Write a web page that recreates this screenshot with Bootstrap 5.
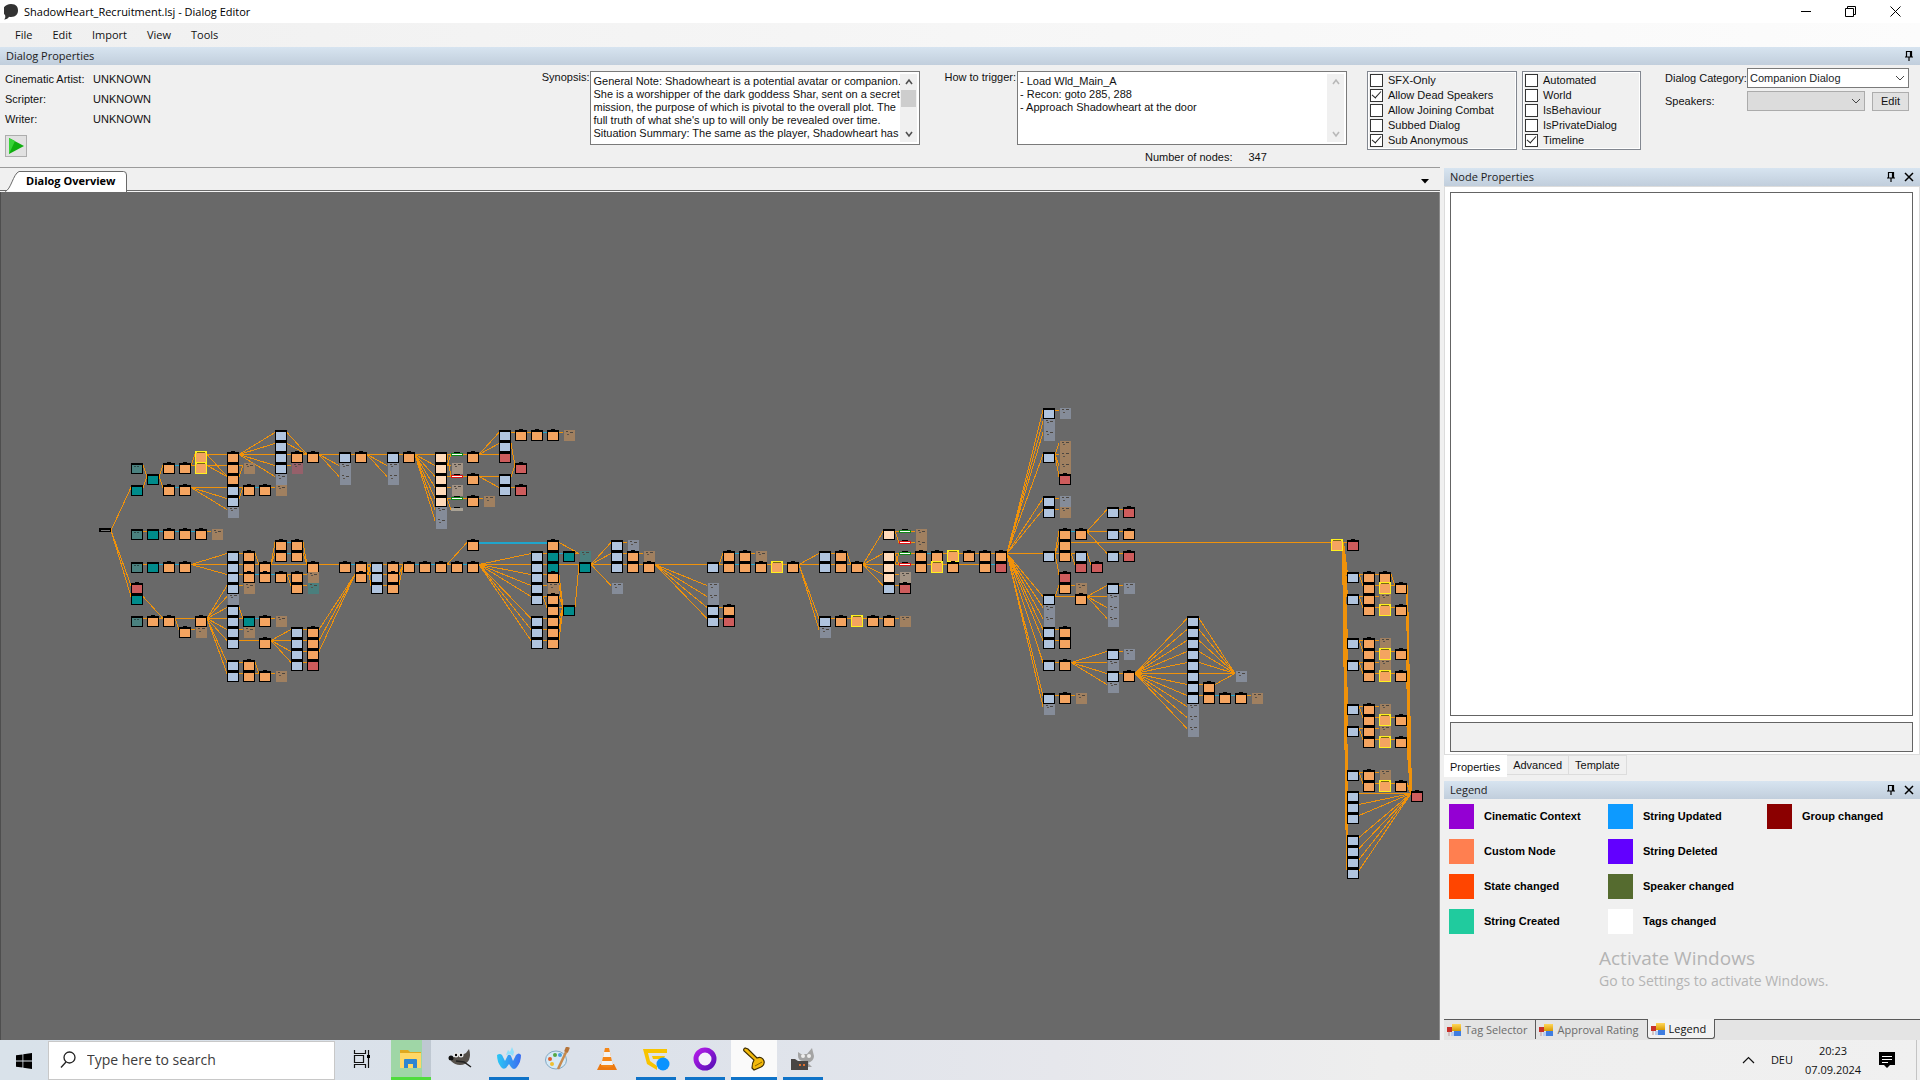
<!DOCTYPE html>
<html lang="en">
<head>
<meta charset="utf-8">
<meta name="viewport" content="width=device-width, initial-scale=1">
<title>ShadowHeart_Recruitment.lsj - Dialog Editor</title>
<link rel="stylesheet" href="https://cdn.jsdelivr.net/npm/bootstrap@5.3.0/dist/css/bootstrap.min.css">
<style>
:root{--ui:"Open Sans","Noto Sans",sans-serif;--form:"Liberation Sans",Arial,sans-serif}
body{font:11px/13px var(--form);color:#111;background:#f0f0f0}
button,input,select,textarea{font:inherit;color:inherit}
.app-window{height:100vh}
.ui-font{font-family:var(--ui);font-size:11px;line-height:18px}
.title-bar{height:23px;background:#fff;color:#000;padding-right:2px}
.win-btn{width:45px;height:20px}
.menu-strip{height:24px;background:linear-gradient(90deg,#f0f0f0,#fcfcfc);padding-left:7px}
.menu-strip a{color:#111;padding:3px 8px}
.dock-head{height:18px;background:linear-gradient(#d7e4f0,#c1cedc);color:#1c1c1c;padding:0 6px}
.plain-btn{background:none;border:0;padding:0;color:#000}
.props{padding:3px 11px 0 5px;height:102px;background:#f0f0f0}
.drop{margin-top:3px}
.meta-list{grid-template-columns:88px auto;grid-auto-rows:20px;justify-content:start;align-items:center;padding-top:1px}
.play-btn{width:22px;height:22px;background:#e1e1e1;border:1px solid #adadad;padding:0;margin-top:6px}
.memo-label{margin-right:1px}
.memo{width:330px;height:74px;background:#fff;border:1px solid #7a7a7a;padding:2px}
.memo textarea{border:0;resize:none;overflow:hidden;outline:0;line-height:13px;padding:1px 0 0;background:#fff;white-space:pre;min-width:0}
.memo-scroll{width:17px;background:#f0f0f0;color:#505050;padding:4px 0}
.memo-scroll.is-idle{color:#b8b8b8}
.memo-scroll i{width:15px;height:17px;background:#cdcdcd}
.node-count{padding:6px 0 0 128px}
.flags{border:1px solid #828790;height:79px;padding:1px 2px;box-shadow:inset 0 0 0 1px #fff}
.flags .tick-row{height:15px;gap:5px}
.flags-a{width:150px;margin-left:20px}
.flags-b{width:119px;margin-left:5px}
.tick{appearance:none;width:13px;height:13px;margin:0;border:1px solid #333;background:#fff}
.tick:checked::before{content:"";display:block;width:9px;height:5px;margin:1px 1px;border:solid #222;border-width:0 0 1px 1px;transform:rotate(-48deg)}
.combo-grid{grid-template-columns:82px 118px 44px;row-gap:3px}
.combo-wide{grid-column:span 2}
.combo{height:20px;border:1px solid #7a7a7a;border-radius:0;padding:0 20px 0 2px;background-color:#fff;background-position:right 3px center;background-size:10px 6px;font-size:11px;line-height:16px;
 --bs-form-select-bg-img:url("data:image/svg+xml,%3csvg xmlns='http://www.w3.org/2000/svg' viewBox='0 0 10 6'%3e%3cpath fill='none' stroke='%23444' d='M1 1l4 4 4-4'/%3e%3c/svg%3e")}
.combo:disabled{background-color:#dcdcdc;border-color:#ababab}
.edit-btn{width:37px;height:19px;background:#e1e1e1;border:1px solid #adadad;padding:0}
.side-dock{width:476px;padding-top:1px}
.doc-strip{height:25px;border-top:1px solid #9b9b9b;border-bottom:1px solid #f4f4f4;box-shadow:inset 0 -1px #696969}
.doc-tab{width:128px;height:20px;padding-left:26px}
.doc-tab svg{left:5px;top:0}
.doc-tab span{font:700 11px/19px var(--ui)}
.graph-area{background:#696969;border-left:1px solid #4e4e4e;border-right:1px solid #8a8a8a}
.prop-page{background:#fff;border:1px solid #dcdcdc;padding:5px 6px 2px 5px;gap:6px}
.prop-grid{background:#fff;border:1px solid #646464}
.prop-help{height:30px;background:#f0f0f0;border:1px solid #646464}
.page-tabs{height:26px}
.page-tabs a{color:#111;border:1px solid #dcdcdc;border-left:0;height:20px;padding:0 6px;line-height:18px}
.page-tabs a.is-active{background:#fff;height:22px;border-color:#fff;line-height:23px}
.legend-body{padding:5px 5px 0;height:220px}
.legend-grid{display:grid;grid-template-columns:repeat(3,159px);grid-auto-flow:column;grid-template-rows:repeat(4,35px)}
.legend-grid div{font:700 11px/25px var(--form);gap:10px;color:#000}
.swatch{width:25px;height:25px}
.activate{font-family:var(--ui);color:#b4b4b4;padding:1px 0 0 150px}
.activate p{font-size:19px;line-height:27px;margin:0}
.activate small{font-size:14px;line-height:18px;display:block}
.dock-tabs{height:21px;background:#e4e4e4}
.dock-tabs a{color:#6b6b6b;border-top:1px solid #5a5a5a;height:20px;padding:0 8px 0 3px;gap:4px;line-height:18px}
.dock-tabs a + a{border-left:1px solid #5a5a5a}
.dock-tabs a.is-active{color:#111;background:#f2f2f2;border:1px solid #5a5a5a;border-top:0;border-radius:0 0 3px 3px}
.dock-tabs .tab-rest{border-top:1px solid #5a5a5a}
.task-bar{height:40px;background:linear-gradient(90deg,#d9e2ea,#dbe1ea 30%,#e6e7ec 55%,#eee 72%,#f0f0f0)}
.start-btn{width:48px}
.search-box{width:287px;height:39px;background:#fff;border:1px solid #c8c8c8;padding-left:11px;gap:11px}
.search-box input{border:0;outline:0;background:none;font:14px/20px var(--ui);padding:0;color:#3c3c3c}
.search-box input::placeholder{color:#3c3c3c;opacity:1}
.task-list{gap:9px;padding-left:7px}
.task-btn{width:40px;height:40px;border-bottom:3px solid transparent}
.task-btn.running{border-bottom-color:#0f73c8}
.task-btn.front{width:46px;margin:0 -3px;background:#fafafa}
.task-btn.alerting{background:linear-gradient(90deg,#9fd6a6 78%,#bfc8d2 78%);border-bottom-color:#4fdc3c}
.tray{height:40px;border-right:1px solid #c4c4c4;margin-right:3px;padding-right:21px}
.clock{width:56px;line-height:19px;margin:0 18px 0 12px}
</style>
<script src="https://cdn.jsdelivr.net/npm/bootstrap@5.3.0/dist/js/bootstrap.bundle.min.js"></script>
</head>
<body>
<svg width="0" height="0" class="position-absolute" aria-hidden="true">
  <symbol id="pin" viewBox="0 0 10 12"><path d="M2.500 6.500V1.500H7.500V6.500M6.500 1.500V7M1 7H9M5 7V11" fill="none" stroke="#000" stroke-width="1.200"/></symbol>
  <symbol id="cross" viewBox="0 0 10 10"><path d="M1 1L9 9M9 1L1 9" fill="none" stroke="#000" stroke-width="1.500"/></symbol>
  <symbol id="up" viewBox="0 0 8 8"><path d="M1 6L4 2L7 6" fill="none" stroke="currentColor" stroke-width="1.600"/></symbol>
  <symbol id="down" viewBox="0 0 8 8"><path d="M1 2L4 6L7 2" fill="none" stroke="currentColor" stroke-width="1.600"/></symbol>
  <linearGradient id="gy" x2="0" y2="1"><stop stop-color="#ffd75a"/><stop offset="1" stop-color="#d99a00"/></linearGradient>
  <symbol id="form" viewBox="0 0 14 14"><path d="M2 7V13" stroke="#b99"/><rect x="0" y="4" width="5" height="5" fill="#c8302a"/><rect x="5" y="1" width="9" height="7" fill="url(#gy)"/><rect x="7" y="8" width="7" height="5" fill="#3f7de0"/><rect x="4" y="9" width="3" height="4" fill="#b8cdf0"/></symbol>
</svg>

<div class="app-window d-flex flex-column overflow-hidden">
  <header class="title-bar d-flex align-items-center ui-font">
    <svg class="ms-1" width="16" height="18" viewBox="0 0 16 18"><path d="M7 1C12.500 1 14 4 14 7.500S12 14 7 14C6 14 5.500 14 5 13.800C4 15.500 2.500 16.500 0 16.500C1.500 15 1.500 13.500 1 12C0 11-1 9.500-1 7.500C-1 4 2.500 1 7 1Z" fill="#333"/></svg>
    <span class="ms-1">ShadowHeart_Recruitment.lsj - Dialog Editor</span>
    <div class="ms-auto d-flex align-self-start">
      <button class="win-btn plain-btn" aria-label="Minimize"><svg width="10" height="10"><path d="M0 5.500H10" stroke="#000"/></svg></button>
      <button class="win-btn plain-btn" aria-label="Restore"><svg width="11" height="11"><path d="M.5 2.500H8.500V10.500H.5ZM2.500 2.500V.5H10.500V8.500H8.500" fill="none" stroke="#000"/></svg></button>
      <button class="win-btn plain-btn" aria-label="Close"><svg width="11" height="11"><path d="M.5 .5L10.500 10.500M10.500 .5L.5 10.500" stroke="#000"/></svg></button>
    </div>
  </header>

  <nav class="menu-strip d-flex align-items-center ui-font">
    <a class="text-decoration-none" href="#">File</a><a class="text-decoration-none ms-1" href="#">Edit</a><a class="text-decoration-none ms-1" href="#">Import</a><a class="text-decoration-none ms-1" href="#">View</a><a class="text-decoration-none ms-1" href="#">Tools</a>
  </nav>

  <div class="dock-head d-flex align-items-center ui-font"><span>Dialog Properties</span><button class="plain-btn ms-auto d-flex" aria-label="Pin"><svg width="10" height="12"><use href="#pin"/></svg></button></div>

  <section class="props d-flex align-items-start">
    <div class="flex-grow-1">
      <div class="meta-list d-grid"><span>Cinematic Artist:</span><span>UNKNOWN</span><span>Scripter:</span><span>UNKNOWN</span><span>Writer:</span><span>UNKNOWN</span></div>
      <button class="play-btn d-flex align-items-center justify-content-center" aria-label="Play"><svg width="16" height="16" viewBox="0 0 16 16"><path d="M1 0L16 8L1 16Z" fill="#0fae0f"/><path d="M1 0L7 3L1 16Z" fill="#37d437"/></svg></button>
    </div>
    <div class="d-flex drop">
      <label class="memo-label" for="synopsis">Synopsis:</label>
      <div class="memo d-flex">
        <textarea id="synopsis" class="flex-grow-1">General Note: Shadowheart is a potential avatar or companion.
She is a worshipper of the dark goddess Shar, sent on a secret
mission, the purpose of which is pivotal to the overall plot. The
full truth of what she's up to will only be revealed over time.
Situation Summary: The same as the player, Shadowheart has
been on a mind flayer's ship. Escaped and crashed near the</textarea>
        <div class="memo-scroll d-flex flex-column align-items-center flex-shrink-0"><svg width="8" height="8"><use href="#up"/></svg><i class="mt-1"></i><svg class="mt-auto" width="8" height="8"><use href="#down"/></svg></div>
      </div>
      <label class="memo-label ms-4" for="trigger">How to trigger:</label>
      <div>
        <div class="memo d-flex">
          <textarea id="trigger" class="flex-grow-1">- Load Wld_Main_A
- Recon: goto 285, 288
- Approach Shadowheart at the door</textarea>
          <div class="memo-scroll is-idle d-flex flex-column align-items-center flex-shrink-0"><svg width="8" height="8"><use href="#up"/></svg><svg class="mt-auto" width="8" height="8"><use href="#down"/></svg></div>
        </div>
        <div class="node-count d-flex gap-3"><span>Number of nodes:</span><span>347</span></div>
      </div>
    </div>
    <div class="flags flags-a drop" id="flagsA"></div>
    <div class="flags flags-b drop" id="flagsB"></div>
    <div class="combo-grid d-grid align-items-center ms-4">
      <label for="category">Dialog Category:</label>
      <select id="category" class="form-select combo combo-wide"><option>Companion Dialog</option></select>
      <label for="speakers">Speakers:</label>
      <select id="speakers" class="form-select combo" disabled><option></option></select>
      <button class="edit-btn ms-auto">Edit</button>
    </div>
  </section>

  <main class="d-flex flex-grow-1 overflow-hidden">
    <section class="d-flex flex-column flex-grow-1 overflow-hidden">
      <div class="doc-strip d-flex align-items-end">
        <a class="doc-tab position-relative text-decoration-none text-black" href="#">
          <svg class="position-absolute" width="122" height="21"><path d="M0 20.500C6 19 8 3 14 .5H118.500Q121.500 .5 121.500 4V21.500" fill="#fff" stroke="#696969"/></svg>
          <span class="position-relative">Dialog Overview</span>
        </a>
        <button class="plain-btn ms-auto me-2 mb-1" aria-label="Open documents"><svg width="12" height="8"><path d="M1 2H9L5 6.500Z"/></svg></button>
      </div>
      <div class="graph-area flex-grow-1 overflow-hidden">
        <svg id="graph" class="d-block" width="1438" height="848" viewBox="1 192 1438 848" shape-rendering="crispEdges" role="img" aria-label="Dialog node graph"></svg>
      </div>
    </section>

    <aside class="side-dock d-flex flex-column flex-shrink-0 ms-1">
      <div class="dock-head d-flex align-items-center ui-font"><span>Node Properties</span><button class="plain-btn ms-auto me-2 d-flex" aria-label="Pin"><svg width="10" height="12"><use href="#pin"/></svg></button><button class="plain-btn d-flex" aria-label="Close"><svg width="10" height="10"><use href="#cross"/></svg></button></div>
      <div class="prop-page d-flex flex-column flex-grow-1"><div class="prop-grid flex-grow-1"></div><div class="prop-help"></div></div>
      <div class="page-tabs d-flex"><a class="is-active text-decoration-none" href="#">Properties</a><a class="text-decoration-none" href="#">Advanced</a><a class="text-decoration-none" href="#">Template</a></div>
      <div class="dock-head d-flex align-items-center ui-font"><span>Legend</span><button class="plain-btn ms-auto me-2 d-flex" aria-label="Pin"><svg width="10" height="12"><use href="#pin"/></svg></button><button class="plain-btn d-flex" aria-label="Close"><svg width="10" height="10"><use href="#cross"/></svg></button></div>
      <div class="legend-body">
        <div class="legend-grid" id="legend"></div>
        <div class="activate"><p>Activate Windows</p><small>Go to Settings to activate Windows.</small></div>
      </div>
      <div class="dock-tabs d-flex ui-font">
        <a class="d-flex align-items-center text-decoration-none" href="#"><svg width="14" height="14"><use href="#form"/></svg>Tag Selector</a>
        <a class="d-flex align-items-center text-decoration-none" href="#"><svg width="14" height="14"><use href="#form"/></svg>Approval Rating</a>
        <a class="is-active d-flex align-items-center text-decoration-none" href="#"><svg width="14" height="14"><use href="#form"/></svg>Legend</a>
        <span class="tab-rest flex-grow-1"></span>
      </div>
    </aside>
  </main>

  <footer class="task-bar d-flex align-items-center ui-font">
    <button class="start-btn plain-btn" aria-label="Start"><svg width="16" height="16" viewBox="0 0 16 16"><path d="M0 2.300L6.500 1.400V7.600H0ZM7.300 1.300L16 0V7.600H7.300ZM0 8.400H6.500V14.600L0 13.700ZM7.300 8.400H16V16L7.300 14.700Z"/></svg></button>
    <label class="search-box d-flex align-items-center"><svg width="16" height="18" viewBox="0 0 16 18"><circle cx="9.500" cy="6.500" r="5.500" fill="none" stroke="#222" stroke-width="1.300"/><path d="M6 11L1 16.500" stroke="#222" stroke-width="1.300"/></svg><input type="text" placeholder="Type here to search" aria-label="Search"></label>
    <div class="task-list d-flex">
      <button class="task-btn plain-btn" aria-label="Task View"><svg width="18" height="18" viewBox="0 0 18 18"><path d="M1.500 0V3.500H12.500V0M1.500 18V14.500H12.500V18M1.500 5.500H10.500V12.500H1.500ZM15.500 0V18" fill="none" stroke="#111" stroke-width="1.200"/><path d="M14 5H17V8H14Z"/></svg></button>
      <button class="task-btn plain-btn alerting" aria-label="File Explorer"><svg width="24" height="22" viewBox="0 0 24 22"><path d="M1 2H9L11 4H22V20H1Z" fill="#e0a91f"/><path d="M1 5H22V20H1Z" fill="#ffd866"/><path d="M5 20V12Q5 11 6 11H17Q18 11 18 12V20H14V16H9V20Z" fill="#2f86d0"/></svg></button>
      <button class="task-btn plain-btn" aria-label="GIMP"><svg width="26" height="24" viewBox="0 0 26 24"><path d="M5 11L9 9L15 8L19 6L22 2Q24 8 22 13Q19 18 13 18Q8 18 4 14Z" fill="#55504a"/><circle cx="4" cy="11" r="2.500" fill="#111"/><circle cx="9" cy="8" r="2.500" fill="#eee"/><circle cx="14" cy="8" r="2.500" fill="#eee"/><circle cx="9" cy="8" r="1.200"/><circle cx="14" cy="8" r="1.200"/><path d="M9 14L17 15L24 20" stroke="#222" stroke-width="1.500" fill="none"/></svg></button>
      <button class="task-btn plain-btn running" aria-label="Waterfox"><svg width="26" height="24" viewBox="0 0 26 24"><defs><linearGradient id="wf"><stop stop-color="#2cc8f5"/><stop offset="1" stop-color="#3b6cf0"/></linearGradient></defs><path d="M1 8Q4 6 6 8L9 14L12 8Q14 7 15 9L17 14L20 8Q23 5 25 8Q25 15 21 20Q18 24 15 20L13 17L10 21Q7 23 5 20Q1 15 1 8Z" fill="url(#wf)"/><path d="M10 8L12 3L14 5L16 0L18 5L17 9L14 7Z" fill="#8fe0fb"/></svg></button>
      <button class="task-btn plain-btn" aria-label="Paint"><svg width="26" height="24" viewBox="0 0 26 24"><ellipse cx="11" cy="13" rx="10.500" ry="9" fill="#d5e9f6" stroke="#82a9c4"/><circle cx="10" cy="8" r="2" fill="#54a846"/><circle cx="15" cy="8" r="2" fill="#4a9ee0"/><circle cx="5" cy="12" r="2" fill="#e0602c"/><circle cx="7" cy="17" r="2" fill="#f0c030"/><path d="M22 3L13 22" stroke="#c78a4e" stroke-width="2.500"/><path d="M23 0L21 5" stroke="#b5743a" stroke-width="4"/></svg></button>
      <button class="task-btn plain-btn" aria-label="VLC"><svg width="22" height="24" viewBox="0 0 22 24"><path d="M1 23L4 17H18L21 23Z" fill="#ec7a12"/><path d="M9 1H13L17 19Q11 22 5 19Z" fill="#f58718"/><path d="M8 5H14L15 10H7ZM6 14H16L17 18H5Z" fill="#f4f4f4"/></svg></button>
      <button class="task-btn plain-btn running" aria-label="GameGuru"><svg width="28" height="24" viewBox="0 0 28 24"><path d="M1 2H25V6H6L8 14L15 19V23L5 17Z" fill="#f8c400"/><path d="M10 9H23L21 14H17V12H11Z" fill="#f8c400"/><circle cx="21" cy="17" r="6.500" fill="#0a93ff"/></svg></button>
      <button class="task-btn plain-btn running" aria-label="Browser"><svg width="24" height="24" viewBox="0 0 24 24"><defs><linearGradient id="br" x2="1" y2="1"><stop stop-color="#b31be8"/><stop offset="1" stop-color="#5a10b8"/></linearGradient></defs><circle cx="12" cy="12" r="9" fill="#f4f0fa" stroke="url(#br)" stroke-width="5"/></svg></button>
      <button class="task-btn plain-btn running front" aria-label="Dialog Editor"><svg width="24" height="24" viewBox="0 0 24 24"><path d="M10 21Q10 16 12 13L2 4Q1 2 3 1L6 2L15 11Q20 9 22 14Q23 18 19 20L12 23Z" fill="#f2b90c" stroke="#3c2c00" stroke-width="1.200"/><path d="M13 19L20 15" stroke="#8a6500"/></svg></button>
      <button class="task-btn plain-btn running" aria-label="Tools"><svg width="26" height="24" viewBox="0 0 26 24"><path d="M8 5L11 7H17L22 1L24 9Q24 14 18 16L22 20H13L14 14Q8 14 8 9Z" fill="#a4a4a4"/><circle cx="13" cy="9" r="2" fill="#eee"/><circle cx="19" cy="9" r="2" fill="#eee"/><path d="M1 12H5L8 14H18V23H1Z" fill="#4a4644"/><path d="M9 17H11V19H9ZM13 17H15V19H13Z" fill="#e07030"/></svg></button>
    </div>
    <div class="tray ms-auto d-flex align-items-center">
      <button class="plain-btn d-flex me-3" aria-label="Show hidden icons"><svg width="13" height="8"><path d="M1 7L6.500 1.500L12 7" fill="none" stroke="#111" stroke-width="1.200"/></svg></button>
      <span>DEU</span>
      <div class="clock text-center">20:23<br>07.09.2024</div>
      <button class="plain-btn d-flex" aria-label="Notifications"><svg width="16" height="16" viewBox="0 0 16 16"><path d="M0 0H16V13H11L8 16L5 13H0Z"/><path d="M3 4.500H13M3 7.500H13M3 10.500H9" stroke="#fff"/></svg></button>
    </div>
  </footer>
</div>

<script>
const checks = {
  flagsA: [['SFX-Only',0],['Allow Dead Speakers',1],['Allow Joining Combat',0],['Subbed Dialog',0],['Sub Anonymous',1]],
  flagsB: [['Automated',0],['World',0],['IsBehaviour',0],['IsPrivateDialog',0],['Timeline',1]]
};
for (const id in checks)
  document.getElementById(id).innerHTML = checks[id].map(([t,on]) =>
    `<label class="tick-row d-flex align-items-center"><input class="tick" type="checkbox"${on?' checked':''}>${t}</label>`).join('');

const legend = [['Cinematic Context','#9400d3'],['Custom Node','#ff7f50'],['State changed','#ff4500'],['String Created','#20cb9e'],
  ['String Updated','#0d9aff'],['String Deleted','#6200ff'],['Speaker changed','#556b2f'],['Tags changed','#ffffff'],['Group changed','#8b0000']];
document.getElementById('legend').innerHTML = legend.map(([t,c]) =>
  `<div class="d-flex"><span class="swatch" style="background:${c}"></span>${t}</div>`).join('');

/* Node table: one line per row, each entry is column + kind. */
const rows = `0 57b 58B
1 57B
2 9b 23b 24o 25o 26o 27O 57B
3 9b 23b 58O
4 4y 6o 9b 10o 11o 13b 14o 16b 17o 19p 20g 21o 23r 57b 58O
5 0t 2o 3o 4y 6o 7O 9b 10R 13B 16B 19p 20P 24r 58O
6 1t 6o 9B 13B 16B 19p 20x 21o 23b 58r
7 0t 2o 3o 6b 7o 8o 9O 19p 20P 23b 24r
8 6b 19p 20g 21o 22O 57b 58B
9 6B 19B 20G 57b 58O 61b 62r
10 19B
11 0f 1t 2o 3o 4o 5O 47p 48g 49O 58o 59o 61b 62o
12 9o 10o 21o 26o 30b 31B 48x 49O 58o 75y 76r
13 6b 7o 9o 10o 25b 26t 27t 28T 30b 31o 32O 37o 38o 39O 43b 44o 47p 48g 49o 50o 51y 52o 53o 54o 57b 58o 59b 61b 62r
14 0f 1t 2o 3o 6b 7o 8o 11o 13o 14o 15b 16o 17o 18o 19o 20o 21o 25b 26t 28t 30b 31o 32o 36b 37o 38o 39o 40y 41o 43b 44o 45o 47p 48x 49o 50y 51o 53o 54r 59r 60r
15 6b 7o 8o 9o 10o 11O 14o 15b 16o 25b 26o 47p 48P 58r 76b 77o 78o
16 0r 6b 7O 10o 11T 15b 16o 25b 26O 30B 36B 47b 48r 58o 59O 61b 62B 77o 78y 79o
17 0t 6B 25b 26o 36B 57b 59o 61B 76b 77o 78O
18 6b 26o 27t 36b 37o 57B 61B 77o 78y 79o
19 0f 1o 2o 4o 6b 7t 8o 9O 25b 26o 36b 37r 43b 44o 45y 46o 47o 48O 57B 61B 66b
20 3o 4O 6b 7O 10b 11o 25b 26o 43B 57b 58o 66b
21 6b 8o 10b 11o 25b 26o 57b 58o 66b 76b 77o 78O
22 10b 11o 61b 62B 66b 77o 78y 79o
23 6b 7o 10b 11r 57b 58o 61B 66b 76b 77o 78O
24 6b 7o 8o 9O 61b 62o 66b 69B 77o 78y 79o
25 61B 66b 67o
26 57b 58o 59O 66b 67o 68o 69o 70O
27 57B 66B 76b 77o 78O
28 66B 77o 78y 79o
29 66B 76b 77o 78O
30 77o 78y 79o
33 76b 77o 78O
34 77o 78y 79o
35 76b 80r
36 76b
37 76b
39 76b
40 76b
41 76b
42 76b`.replace('5 0t', '5 0f');

/* Links: source: targets, as column.row; a leading * marks a blue link. */
const links = `0.5:1.6;0.7:1.6;1.6:2.5 2.7;2.5:*3.5;3.5:4.4 4.5;4.4:6.4 6.6;4.5:6.5 6.6;2.7:*3.7;3.7:6.7 6.8 6.9
6.4:9.2 9.3 9.4 9.5 9.6;6.5:7.5;6.6:7.5;6.7:7.7;6.8:7.7;7.7:*8.7;8.7:9.7;9.2:11.4;9.3:11.4;9.4:10.4;9.5:10.5;10.4:11.4
11.4:13.4 13.5 13.6;13.4:14.4;14.4:16.4 16.5 16.6;16.4:17.4;17.4:19.4 19.5 19.6 19.7 19.8 19.9 19.10
0.11:1.11;1.11:*2.11;2.11:*3.11;3.11:*4.11;4.11:5.11;0.14:1.14;1.14:*2.14;2.14:*3.14;3.14:6.13 6.14 6.15
6.13:7.13;6.14:7.14;7.13:8.14;7.14:8.14;8.14:9.12 9.13 11.14;9.12:*10.12;9.13:*10.13;10.12:11.14;10.13:11.14
6.15:7.15;7.15:*8.15;8.15:*9.15;9.15:10.15 10.16;10.15:11.15;10.16:11.16;11.14:13.14;13.14:*14.14;14.14:15.14 15.15 15.16;14.15:15.15 15.14
15.14:16.14;15.15:16.15;15.16:16.16;16.14:17.14;16.15:17.14;16.16:17.14;17.14:*18.14;18.14:*19.14;19.14:20.14 21.12;20.14:*21.14;21.12:*26.12
21.14:25.13 25.14 25.15 25.16 25.17 25.19 25.20 25.21;0.17:2.19;0.19:1.19;1.19:2.19;2.19:4.19 3.20;3.20:4.20
4.19:6.16 6.17 6.18 6.19 6.20 6.21 6.23 6.24;6.16:7.16;6.18:7.19;6.19:7.19;7.19:*8.19;8.19:9.19;6.20:7.20;6.21:8.21;8.21:10.20 10.21 10.22 10.23
10.20:11.20;10.21:11.21;10.22:11.22;10.23:11.23;11.20:14.15;11.21:14.15;11.22:14.15;6.23:7.23;6.24:7.24;7.23:8.24;7.24:8.24;8.24:9.24
19.4:20.4 20.6;19.5:20.5 20.4;19.6:20.6;19.7:20.7;19.8:20.8 20.9;20.4:21.4;20.6:21.6;20.8:21.8;21.8:22.8;21.4:23.2 23.3 23.4;21.6:23.6 23.7
23.2:24.2;24.2:25.2;25.2:*26.2;26.2:27.2;23.3:24.5;23.6:24.5;23.7:24.7;25.13:26.13;26.13:*27.13;27.13:28.13;25.14:26.14;26.14:28.14
25.15:26.15;25.16:26.16;25.17:26.17;25.17:26.18;25.19:26.19;25.20:26.20;25.21:26.21;26.12:28.13;26.15:27.18;26.16:27.18;26.17:27.18;26.18:27.18;26.19:27.18;26.20:27.18;26.21:27.18
27.18:28.14;28.14:30.12 30.13 30.14 30.16;30.12:31.12;30.13:31.13;30.14:31.14;31.13:32.13;31.14:32.14;32.14:36.14 36.16 36.17 36.18 36.19
36.14:37.14 37.13;37.13:*38.13;38.13:39.13;37.14:*38.14;38.14:*39.14;39.14:40.14;40.14:41.14;36.18:37.18;36.19:37.19;41.14:43.13 43.14 43.19 43.20
43.13:44.13;43.14:44.14;44.13:45.14;44.14:45.14;45.14:47.11 47.13 47.14 47.15 47.16;47.11:48.11 48.12;48.11:49.11;48.12:49.12;47.13:48.13 48.14;47.14:48.14 48.13
47.15:48.15;47.16:48.16;48.13:49.13;48.14:49.14;49.13:*50.13;50.13:51.13;51.13:52.13;52.13:53.13;53.13:54.13;49.14:50.14;50.14:51.14;51.14:53.14;53.14:*54.14
43.19:44.19;44.19:45.19;45.19:46.19;46.19:47.19;47.19:48.19
54.13:57.0 57.1 57.2 57.4 57.8 57.9 57.13 57.17 57.18 57.19 57.20 57.21 57.23 57.26 57.27
57.0:58.0;57.4:58.3 58.4 58.5 58.6;57.8:58.8;57.9:58.9;57.13:58.11 58.12 58.13 58.15;58.11:*59.11;59.11:61.9 61.11 61.13;61.9:62.9;61.11:62.11;61.13:62.13
58.12:75.12;58.13:59.13 59.14;59.13:60.14;57.17:58.16 59.17;58.16:59.16;59.17:61.16 61.17 61.18 61.19;61.16:62.16;57.20:58.20;57.21:58.21;57.23:58.23;58.23:61.22 61.23 61.24 61.25
61.22:62.22;61.24:62.24;62.24:66.19 66.20 66.21 66.22 66.23 66.24 66.25 66.26 66.27 66.28 66.29
66.19:69.24;66.20:69.24;66.21:69.24;66.22:69.24;66.23:69.24;66.24:69.24;66.25:67.25;67.25:69.24;66.26:67.26;67.26:*68.26;68.26:*69.26;69.26:70.26
57.26:58.26;58.26:59.26;75.12:76.12 76.15 76.17 76.21 76.23 76.27 76.29 76.33 76.35 76.36 76.37 76.39 76.40 76.41 76.42
76.35:80.35;76.36:80.35;76.37:80.35;76.39:80.35;76.40:80.35;76.41:80.35;76.42:80.35;78.15:79.16`.split(/[\n;]/);
for (const k of [15,17,21,23,27,29,33]) {
  links.push(`76.${k}:77.${k} 77.${k+1}`, `77.${k}:78.${k}`, `77.${k+1}:78.${k+1}`, `78.${k+1}:79.${k+1}`, `79.${k+1}:80.35`);
}

const X = c => 131 + 16 * c, Y = r => Math.round(408.2 + 10.95 * r);
const line = (x1,y1,x2,y2,c,w=1) => `<line x1="${x1}" y1="${y1}" x2="${x2}" y2="${y2}" stroke="${c}" stroke-width="${w}"/>`;
const rect = (x,y,w,h,f) => `<rect x="${x}" y="${y}" width="${w}" height="${h}" fill="${f}"/>`;
const ORANGE = '#f0920a', BLUE = '#1fa5cc';
let out = '';
for (const [c,r] of [[0,7],[0,16],[0,17]]) out += line(111,530.5,X(c),Y(r)+2.5,ORANGE);
for (const l of links) {
  const [from, to] = l.split(':'), [c,r] = from.split('.').map(Number);
  for (const t of to.split(' ')) {
    const blue = t[0] === '*', [c2,r2] = t.replace('*','').split('.').map(Number);
    const bundle = (c === 75 && r2 > r) || c === 79 || (blue && c2 - c > 1);
    out += line(X(c)+12, Y(r)+2.5, X(c2), Y(r2)+2.5, blue ? BLUE : ORANGE, bundle ? 2 : 1);
  }
}
const solid = {o:'#f4a460', b:'#b0c4de', t:'#008b8b', r:'#cd5c5c', p:'#ffdab9', f:'#4a817f'};
const faded = {O:'#a08060', B:'#858c99', T:'#4a7f7d', R:'#96606a', P:'#a39384'};
out += rect(99,528,12,4,'#000') + rect(101,530,9,1,'#777');
for (const row of rows.split('\n')) {
  const [r, ...items] = row.split(' ');
  for (const it of items) {
    const c = parseInt(it), k = it.slice(-1), x = X(c), y = Y(+r);
    if (solid[k]) {
      out += rect(x,y,12,11,'#000') + rect(x+1,y+2,10,8,solid[k]);
      if (k === 'o' || k === 'r') out += rect(x+4,y-1,4,1,'#000');
      if (k === 'f') out += rect(x+3,y+3,2,1,'#2c4a48') + rect(x+6,y+3,2,1,'#2c4a48');
    } else if (faded[k]) {
      out += rect(x+1,y,11,11,faded[k]) + rect(x+3,y+1,2,1,'#4c4640') + rect(x+7,y+1+(c%2),3,1,'#4c4640')
        + rect(x+4,y+4-(r%2),2,1,'#5a544e');
    } else if (k === 'y') {
      out += rect(x,y-1,12,12,'#fff01e') + rect(x+1,y+1,10,9,'#f4a460') + rect(x+2,y,8,1,'#776a10');
    } else {
      out += rect(x,y+1,12,3,{g:'#118a18',x:'#e01414',G:'#aaa294'}[k]) + rect(x+3,y,6,1,'#000');
      if (k !== 'G') out += rect(x+1,y+2,10,1,'#fff');
    }
  }
}
document.getElementById('graph').innerHTML = out;
</script>
</body>
</html>
